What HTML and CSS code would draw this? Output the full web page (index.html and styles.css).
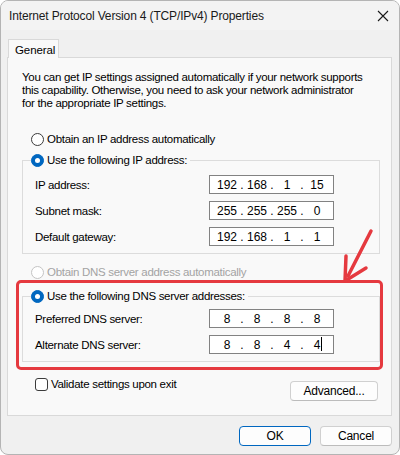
FILE: index.html
```html
<!DOCTYPE html>
<html lang="en">
<head>
<meta charset="utf-8">
<title>Internet Protocol Version 4 (TCP/IPv4) Properties</title>
<link rel="stylesheet" href="styles.css">
</head>
<body>
<div class="window">
  <div class="titlebar">
    <span class="title">Internet Protocol Version 4 (TCP/IPv4) Properties</span>
    <svg class="close" width="12" height="12" viewBox="0 0 12 12"><path d="M1 1 L11 11 M11 1 L1 11" stroke="#1a1a1a" stroke-width="1.1" fill="none"/></svg>
  </div>
  <div class="body">
    <div class="tabs"><div class="tab">General</div></div>
    <div class="panel">
      <p class="intro">You can get IP settings assigned automatically if your network supports<br>this capability. Otherwise, you need to ask your network administrator<br>for the appropriate IP settings.</p>
      <div class="option first"><span class="radio"></span><span>Obtain an IP address automatically</span></div>
      <fieldset class="group g1">
        <legend class="option"><span class="radio checked"></span><span>Use the following IP address:</span></legend>
        <div class="rows">
          <div class="field"><span class="label">IP address:</span><div class="ipbox"><span class="oct">192</span><span class="dot">.</span><span class="oct">168</span><span class="dot">.</span><span class="oct">1</span><span class="dot">.</span><span class="oct">15</span></div></div>
          <div class="field"><span class="label">Subnet mask:</span><div class="ipbox"><span class="oct">255</span><span class="dot">.</span><span class="oct">255</span><span class="dot">.</span><span class="oct">255</span><span class="dot">.</span><span class="oct">0</span></div></div>
          <div class="field"><span class="label">Default gateway:</span><div class="ipbox"><span class="oct">192</span><span class="dot">.</span><span class="oct">168</span><span class="dot">.</span><span class="oct">1</span><span class="dot">.</span><span class="oct">1</span></div></div>
        </div>
      </fieldset>
      <div class="option disabled"><span class="radio"></span><span>Obtain DNS server address automatically</span></div>
      <fieldset class="group g2">
        <legend class="option"><span class="radio checked"></span><span>Use the following DNS server addresses:</span></legend>
        <div class="rows">
          <div class="field"><span class="label">Preferred DNS server:</span><div class="ipbox"><span class="oct">8</span><span class="dot">.</span><span class="oct">8</span><span class="dot">.</span><span class="oct">8</span><span class="dot">.</span><span class="oct">8</span></div></div>
          <div class="field"><span class="label">Alternate DNS server:</span><div class="ipbox"><span class="oct">8</span><span class="dot">.</span><span class="oct">8</span><span class="dot">.</span><span class="oct">4</span><span class="dot">.</span><span class="oct">4<span class="caret"></span></span></div></div>
        </div>
      </fieldset>
      <div class="bottom">
        <div class="check"><span class="box"></span><span>Validate settings upon exit</span></div>
        <div class="btn adv">Advanced...</div>
      </div>
      <div class="highlight"></div>
      <svg class="arrow" width="50" height="70" viewBox="0 0 50 70"><g stroke="#e5393f" stroke-width="3.5" stroke-linecap="round" stroke-linejoin="round" fill="none"><path d="M36 6 L13 51"/><path d="M11 31 L10 56 L31 43"/></g></svg>
    </div>
    <div class="footer">
      <div class="btn ok">OK</div>
      <div class="btn">Cancel</div>
    </div>
  </div>
</div>
</body>
</html>
```
FILE: styles.css
```css
html, body { margin: 0; padding: 0; background: #ffffff; }
body { font-family: "Liberation Sans", Arial, sans-serif; font-size: 11.5px; color: #000; letter-spacing: -0.3px; }

.window {
  width: 400px; height: 455px; box-sizing: border-box;
  border: 1px solid #b4b4b4; border-radius: 8px;
  background: #f0f0f0; overflow: hidden;
}
.titlebar {
  height: 29px; display: flex; align-items: center;
  padding-left: 8px; background: #f3f3f3;
}
.title { font-size: 12px; color: #1a1a1a; letter-spacing: -0.15px; }
.close { margin-left: auto; margin-right: 10px; }

.body { padding: 9px 7px 0 6px; }
.tabs { height: 18px; display: flex; }
.tab {
  position: relative; z-index: 1;
  width: 51px; height: 19px; box-sizing: border-box; margin-left: 1px;
  border: 1px solid #d9d9d9; border-bottom: none;
  background: #f9f9f9; padding: 3px 0 0 6px; line-height: 14px;
  letter-spacing: -0.1px;
}
.panel {
  position: relative; height: 359px; box-sizing: border-box;
  border: 1px solid #d9d9d9; background: #f9f9f9;
  padding: 13px 0 0 14px;
}
.intro { margin: 0; line-height: 13px; white-space: nowrap; }

.option { display: flex; align-items: center; height: 16px; padding-left: 9px; }
.option.first { margin-top: 21px; }
.radio {
  width: 13px; height: 13px; box-sizing: border-box; border-radius: 50%;
  border: 1px solid #3b3b3b; background: #fff; margin-right: 3px; flex: none;
  position: relative;
}
.radio.checked { background: #0067c0; border-color: #0067c0; }
.radio.checked::after {
  content: ""; position: absolute; left: 3px; top: 3px;
  width: 5px; height: 5px; border-radius: 50%; background: #fff;
}
.option.disabled { color: #a3a3a3; margin-top: 10px; }
.option.disabled .radio { border-color: #c4c4c4; }

.group {
  width: 358px; box-sizing: border-box; margin: 0;
  border: 1px solid #dcdcdc; padding: 0 8px 7px 8px;
}
.group legend { padding: 0 3px 0 0; }
.group .option { padding-left: 0; }
.g1 { margin-top: 5px; }
.g2 { margin-top: 8px; }
.rows { display: flex; flex-direction: column; gap: 7px; padding-top: 7px; }
.g2 .rows { padding-top: 5px; }
.field { display: flex; align-items: center; padding-left: 4px; }
.label { flex: 0 0 174px; }
.ipbox {
  width: 125px; height: 19px; box-sizing: border-box;
  border: 1px solid #828282; background: #fff;
  display: flex; align-items: center; padding-left: 5px;
  font-size: 12px; letter-spacing: 0;
}
.oct { width: 24px; text-align: center; position: relative; }
.dot { width: 6px; text-align: center; }
.caret {
  position: absolute; top: -1px; width: 1px; height: 14px; background: #000; margin-left: 1px;
}

.bottom { display: flex; justify-content: space-between; align-items: flex-start; width: 356px; margin-top: 15px; }
.check { display: flex; align-items: center; height: 14px; padding-left: 13px; }
.box {
  width: 13px; height: 13px; box-sizing: border-box; border: 1px solid #3b3b3b;
  border-radius: 3px; background: #fff; margin-right: 3px;
}
.btn {
  width: 72px; height: 20px; box-sizing: border-box;
  border: 1px solid #d0d0d0; border-bottom-color: #bcbcbc; border-radius: 4px;
  background: #fdfdfd; display: flex; align-items: center; justify-content: center;
  font-size: 12px; letter-spacing: -0.2px;
}
.btn.adv { width: 88px; margin-top: 4px; }
.btn.ok { border-color: #0067c0; }
.footer { display: flex; justify-content: flex-end; gap: 9px; margin-top: 10px; }

.highlight {
  position: absolute; left: 8px; top: 222px; width: 367px; height: 90px;
  box-sizing: border-box; border: 3px solid #e5393f; border-radius: 5px;
}
.arrow { position: absolute; left: 327px; top: 167px; }
```
